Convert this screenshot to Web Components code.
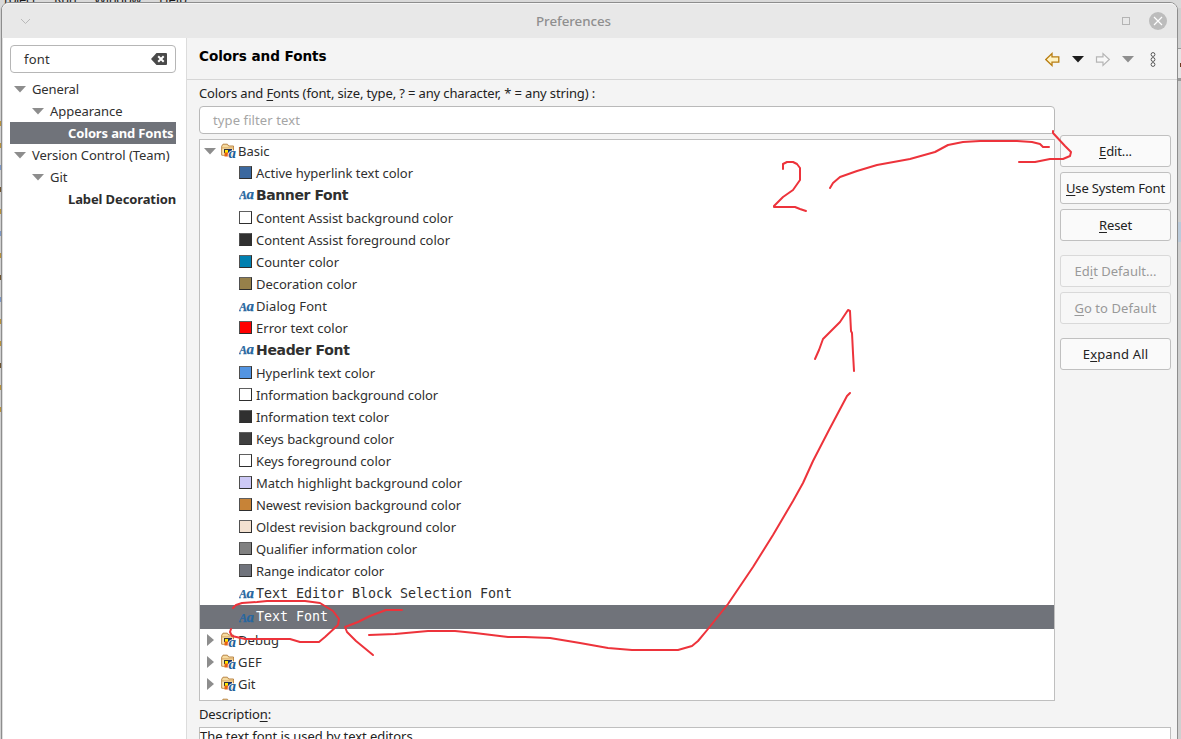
<!DOCTYPE html>
<html lang="en">
<head>
<meta charset="utf-8">
<title>Preferences</title>
<style>
html,body{margin:0;height:100%;overflow:hidden;background:#cfcfcf}
body{font:13px/22px "Noto Sans","Open Sans",sans-serif;color:#303030}
</style>
</head>
<body>
<prefs-app></prefs-app>
<script>
const define = (name, html, after) => customElements.define(name, class extends HTMLElement {
  connectedCallback() {
    if (this.shadowRoot) return;
    const t = document.createElement('template');
    t.innerHTML = typeof html === 'function' ? html(this) : html;
    this.attachShadow({mode: 'open'}).append(t.content.cloneNode(true));
    if (after) after(this);
  }
});

/* A single-line label whose tracking is adjusted to a given width; "&" marks the mnemonic. */
define('fit-label', el => {
  const txt = el.getAttribute('text');
  const i = txt.indexOf('&');
  const body = i < 0 ? txt : txt.slice(0, i) + '<u>' + txt[i + 1] + '</u>' + txt.slice(i + 2);
  return `<style>:host{display:inline-block;white-space:pre;flex:none}
  span{display:inline-block;font-kerning:normal;font-variant-ligatures:none}
  u{text-decoration:underline;text-decoration-thickness:1px;text-underline-offset:2px}</style><span>${body}</span>`;
}, el => {
  const s = el.shadowRoot.querySelector('span'), w = +el.getAttribute('w');
  if (!w) return;
  const n = s.textContent.length;
  s.style.letterSpacing = ((w - s.getBoundingClientRect().width) / n) + 'px';
});

define('folder-icon', el => `<style>:host{display:block;width:16px;height:16px}svg{display:block}text{font:italic bold 15px "Liberation Serif",serif}</style>
<svg width="16" height="16" viewBox="0 0 16 16">
<path d="M.7 12.2V3.2L2 1.2h4.4L7.7 3h4.8v9.2z" fill="#f6dba0" stroke="#b98445"/>
<path d="M1.5 5.5h10.5v6.2H1.5z" fill="#f9e6b8"/><path d="M1 4.9h11.5" stroke="#d9a964" fill="none"/>
<rect x="3" y="6" width="4.500" height="4" fill="#333"/><rect x="4" y="7" width="3" height="3" fill="#ffe800"/>
<rect x="7" y="6" width="4" height="4" fill="#1b2f66"/><rect x="3.500" y="9.500" width="4" height="4" fill="#e8650c"/>
${el.hasAttribute('plain') ? '' : '<text x="7.5" y="15" fill="#1e6098" stroke="#fff" stroke-width="1.4" paint-order="stroke">a</text>'}</svg>`);

define('font-icon', `<style>:host{display:block;width:15px;height:13px}svg{display:block}text{font:italic bold 12px "Liberation Serif",serif}</style>
<svg width="15" height="13" viewBox="0 0 15 13" fill="#2767a0" stroke="#2767a0" stroke-width=".25"><text x="0" y="11" textLength="8" lengthAdjust="spacingAndGlyphs">A</text><text x="7.400" y="11" textLength="7.500" lengthAdjust="spacingAndGlyphs" style="font-size:15px">a</text></svg>`);

define('color-swatch', el => `<style>:host{display:block;width:13px;height:13px;box-sizing:border-box;border:1px solid #2e2e2e;border-top-color:#606060;border-left-color:#505050;background:${el.getAttribute('color')}}</style>`);

define('tree-arrow', el => el.hasAttribute('closed')
  ? `<style>:host{display:flex;width:12px;justify-content:center;flex:none}</style><svg width="8" height="12"><path d="M1 0v12l7-6z" fill="#8d8d8d"/></svg>`
  : `<style>:host{display:flex;width:12px;flex:none}</style><svg width="12" height="7"><path d="M0 0h12L6 6.5z" fill="#8d8d8d"/></svg>`);

/* Row of a tree: slotted arrow/icon followed by a label. */
define('tree-row', el => `<style>
:host{display:flex;align-items:center;box-sizing:border-box;height:${el.getAttribute('h') || 22}px;padding-left:${el.getAttribute('pad')}px}
:host([selected]){background:#70737a;color:#fff}
:host([bold]){font-weight:700;color:#2c2c2c}
:host([bold][selected]){color:#fff}
:host([kind=head]){font:bold 14px/20px "DejaVu Sans",sans-serif;padding-bottom:2px}
:host([kind=mono]){font:13.33px/20px "DejaVu Sans Mono",monospace}
.lead{flex:none;display:flex;align-items:center}</style>
<span class="lead"><slot></slot></span><fit-label text="${el.getAttribute('text')}" w="${el.getAttribute('w')}"></fit-label>`);

define('push-button', el => `<style>
:host{display:flex;box-sizing:border-box;height:32px;width:111px;align-items:center;justify-content:center;border:1px solid #c0c0c0;border-radius:3px;background:#fafafa;color:#222;margin-top:${el.getAttribute('gap') || 5}px}
:host([disabled]){border-color:#d9d9d9;background:#f7f7f7;color:#999}
</style><fit-label text="${el.getAttribute('text')}" w="${el.getAttribute('w')}"></fit-label>`);

define('title-bar', `<style>
:host{display:flex;flex:none;align-items:center;height:35px;background:#e8e8e8;padding:0 10px 0 18px;border-top:1px solid #f6f6f6;box-sizing:border-box;border-radius:7px 7px 0 0;color:#8f8f8f}
.t{flex:1;display:flex;justify-content:center;padding-right:6px;font:500 13.33px/22px "Noto Sans",sans-serif}
.max{width:6px;height:6px;border:1px solid #b4b4b4;margin-right:19px}
svg{display:block}</style>
<svg width="11" height="7"><path d="M1 1l4.5 4.5L10 1" fill="none" stroke="#b9b9b9"/></svg>
<div class="t"><fit-label text="Preferences" w="75"></fit-label></div>
<div class="max"></div>
<svg width="18" height="18"><circle cx="9" cy="9" r="9" fill="#bcbcbc"/><path d="M5 5l8 8M13 5l-8 8" stroke="#fff" stroke-width="1.2"/></svg>`);

define('nav-panel', `<style>
:host{display:block;box-sizing:border-box;width:184px;background:#fff;padding:7px 10px 0 8px;border-left:1px solid #dedede;padding-left:7px}
.search{display:flex;align-items:center;justify-content:space-between;box-sizing:border-box;height:28px;border:1px solid #b6b6b6;border-radius:4px;padding:0 8px 0 13px;margin-bottom:5px}
tree-arrow{margin-right:6px}svg{display:block}</style>
<div class="search"><fit-label text="font" w="26"></fit-label>
<svg width="16" height="12"><path d="M5.500 0H15a1 1 0 0 1 1 1v10a1 1 0 0 1-1 1H5.500L0 6z" fill="#4a4a4a"/><path d="M7.200 3.200l5.500 5.500M12.700 3.200l-5.500 5.500" stroke="#fff" stroke-width="2"/></svg></div>
<tree-row pad="4" text="General" w="47"><tree-arrow></tree-arrow></tree-row>
<tree-row pad="22" text="Appearance" w="72.500"><tree-arrow></tree-arrow></tree-row>
<tree-row pad="58" text="Colors and Fonts" w="105.500" bold selected></tree-row>
<tree-row pad="4" text="Version Control (Team)" w="137.500"><tree-arrow></tree-arrow></tree-row>
<tree-row pad="22" text="Git" w="17.500"><tree-arrow></tree-arrow></tree-row>
<tree-row pad="58" text="Label Decoration" w="108" bold></tree-row>`);

define('page-header', `<style>
:host{display:flex;box-sizing:border-box;height:42px;border-bottom:1px solid #d6d6d6;padding:8px 19px 0 12px;align-items:flex-start;justify-content:space-between;font:bold 13.6px/20px "DejaVu Sans",sans-serif;color:#000}
svg{display:block;margin-top:6px}</style>
<fit-label text="Colors and Fonts" w="127.500"></fit-label>
<svg width="113" height="16" viewBox="0 0 113 16">
<path d="M.8 7.500L7 1.600v3.200h6.800v5.400H7v3.200z" fill="#fff3c4" stroke="#b87d12" stroke-width="1.300"/>
<path d="M27 4h12l-6 6.500z" fill="#1c1c1c"/>
<path d="M64.300 7.500L58 1.600v3.200h-6.500v5.400H58v3.200z" fill="#f8f8f8" stroke="#b5b5b5" stroke-width="1.200"/>
<path d="M77 4h12l-6 6.500z" fill="#8e8e8e"/>
<g fill="#fff" stroke="#555"><circle cx="108" cy="2.500" r="1.900"/><circle cx="108" cy="7.500" r="1.900"/><circle cx="108" cy="12.500" r="1.900"/></g></svg>`);

const items = [
  ['Active hyperlink text color', 157, '#3b689f'], ['Banner Font', 92, 'head', 23],
  ['Content Assist background color', 197, '#fff'], ['Content Assist foreground color', 194, '#303030'],
  ['Counter color', 83, '#0080b0'], ['Decoration color', 101, '#96804a'], ['Dialog Font', 71, 'font'],
  ['Error text color', 92, '#f00'], ['Header Font', 93.5, 'head', 23], ['Hyperlink text color', 119, '#5294e2'],
  ['Information background color', 182, '#fff'], ['Information text color', 133, '#303030'],
  ['Keys background color', 138, '#404040'], ['Keys foreground color', 135, '#fff'],
  ['Match highlight background color', 206, '#cdc9f6'], ['Newest revision background color', 205, '#c78337'],
  ['Oldest revision background color', 200, '#f3e1d0'], ['Qualifier information color', 161, '#808080'],
  ['Range indicator color', 128, '#70737c'], ['Text Editor Block Selection Font', 256, 'mono', 23],
  ['Text Font', 72, 'mono', 24, 'selected']];

define('font-tree', () => `<style>
:host{display:block;box-sizing:border-box;width:856px;height:562px;border:1px solid #bfbfbf;background:#fff;overflow:hidden;color:#303030}
tree-arrow{margin-right:5px}folder-icon{margin-right:1px}
color-swatch{margin:-1px 4px 0 0}font-icon{margin-right:2px}</style>
<tree-row pad="4" text="Basic" w="31.5"><tree-arrow></tree-arrow><folder-icon></folder-icon></tree-row>
${items.map(([t, w, k, h, s]) => `<tree-row pad="39" text="${t}" w="${w}" h="${h || 22}" kind="${k}" ${s || ''}>${k[0] === '#' ? `<color-swatch color="${k}"></color-swatch>` : '<font-icon></font-icon>'}</tree-row>`).join('')}
${[['Debug', 41], ['GEF', 24], ['Git', 17.5], ['', 0]].map(([t, w]) => `<tree-row pad="4" text="${t}" w="${w}"><tree-arrow closed></tree-arrow><folder-icon ${t ? '' : 'plain'}></folder-icon></tree-row>`).join('')}`);

define('font-page', `<style>
:host{display:flex;flex-direction:column;box-sizing:border-box;flex:1;background:#f4f4f4;border-left:1px solid #dcdcdc;color:#222}
.body{display:flex;gap:5px;padding:2px 6px 0 12px}
.main{flex:none;width:856px;display:flex;flex-direction:column}
.filter{box-sizing:border-box;height:28px;border:1px solid #b9b9b9;border-radius:4px;background:#fff;padding:2px 13px;color:#a5a5a5;margin:2px 0 5px}
.buttons{padding-top:48px}
.main fit-label{height:22px}
.desc{box-sizing:border-box;margin:2px 6px 0 12px;height:40px;border:1px solid #bfbfbf;background:#fff;line-height:16px;padding:0}
.dl{padding:2px 12px 0;height:22px}</style>
<page-header></page-header>
<div class="body"><div class="main"><fit-label text="Colors and &Fonts (font, size, type, ? = any character, * = any string) :" w="396"></fit-label>
<div class="filter"><fit-label text="type filter text" w="87"></fit-label></div><font-tree></font-tree></div>
<div class="buttons">
<push-button text="&Edit..." w="33"></push-button><push-button text="&Use System Font" w="99"></push-button><push-button text="&Reset" w="33"></push-button>
<push-button gap="14" disabled text="Ed&it Default..." w="82"></push-button><push-button disabled text="&Go to Default" w="82"></push-button>
<push-button gap="14" text="E&xpand All" w="65.500"></push-button></div></div>
<div class="dl"><fit-label text="Descriptio&n:" w="72"></fit-label></div>
<div class="desc"><fit-label text="The text font is used by text editors." w="216"></fit-label></div>`);

/* Hand-drawn red marks over the dialog. */
define('pen-marks', `<style>:host{position:absolute;left:0;top:0;width:1181px;height:739px;pointer-events:none}</style>
<svg width="1181" height="739" fill="none" stroke="#ed333b" stroke-width="2" stroke-linecap="round" stroke-linejoin="round">
<polyline points="783,169 783,164 787,162 793,162 797,164 800,168 800,180 793,190 783,197 774,206 774,207 795,207 800,209 806,211"/>
<polyline points="830,188 833,183 840,177 857,171 877,165 910,159 935,152 948,145 963,142 980,141 1017,141 1032,142 1040,144 1043,147 1049,147"/>
<polyline points="1053,131 1053,133 1065,146 1071,152 1070,156 1063,159 1050,159 1035,162 1019,162"/>
<polyline points="815,359 819,350 823,339 840,322 848,310 850,311 851,331 852,333 853,353 854,371"/>
<polyline points="850,393 847,396 829,430 813,461 803,483 793,501 773,535 753,567 728,604 708,629 698,641 692,646 678,650 632,650 608,648 580,643 550,638 525,637 508,637 475,633 455,631 428,631 395,634 369,635"/>
<polyline points="402,610 386,610 370,616 358,622 345,627 347,632 356,641 373,655"/>
<polyline points="233,608 236,605 242,603 257,602 267,601 305,601 320,603 333,611 339,619 338,625 325,637 319,642 300,642 290,639 245,639 232,636 230,632 231,629"/>
</svg>`);

define('prefs-app', `<style>
:host{display:block;position:relative;width:1181px;height:739px;overflow:hidden;background:#d0d0d0}
.host{display:flex;gap:18px;height:8px;padding-left:4px;line-height:8px;margin-top:0;color:#1b1b1b;background:#d9d9d9}
.host fit-label{height:8px;margin-top:-5px}
.window{position:absolute;left:1px;top:2px;box-sizing:border-box;width:1177px;height:760px;border:1px solid #8d8d8d;border-radius:8px 8px 0 0;display:flex;flex-direction:column;background:#f4f4f4}
.cols{display:flex;flex:1}
.edge{display:flex;flex-direction:column;align-items:flex-end;height:731px}
.edge i{display:block;width:3px;height:37px;margin-top:3px;border-bottom:1px solid #999}
.edge b{display:block;width:3px;height:29px;background:#e4e4e4;border-bottom:3px solid #999}
.edge em{display:block;width:3px;height:20px;margin-top:141px;background:#bccbda}
.edge s{display:block;width:1px;height:4px;background:#6b3a20;margin-top:-18px;margin-bottom:14px}
.marks{position:absolute;left:0;top:121px;display:grid;grid-auto-rows:5px;gap:17px;width:1px}
.marks i{display:block;background:#b8923c}.marks i:nth-child(3n){background:#7d98c6}.marks i:nth-child(4n){background:#6e5430}
</style>
<div class="host"><fit-label text="roject" w="32"></fit-label><fit-label text="Run" w="22"></fit-label><fit-label text="Window" w="47"></fit-label><fit-label text="Help" w="28"></fit-label></div>
<div class="edge"><i></i><b></b><s></s><em></em></div>
<div class="marks"><i></i><i></i><i></i><i></i><i></i><i></i><i></i><i></i><i></i><i></i><i></i><i></i><i></i><i></i></div>
<div class="window"><title-bar></title-bar><div class="cols"><nav-panel></nav-panel><font-page></font-page></div></div>
<pen-marks></pen-marks>`);
</script>
</body>
</html>
